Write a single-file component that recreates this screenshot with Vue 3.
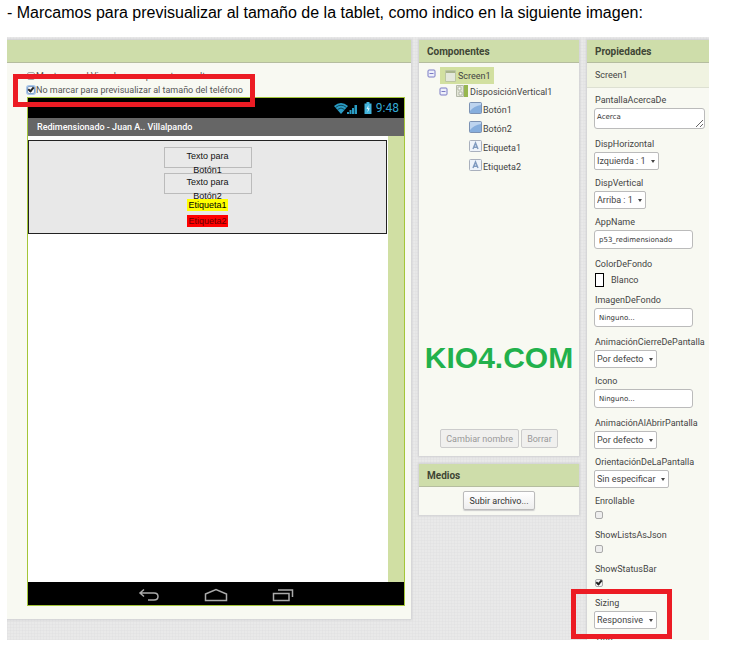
<script setup>
import { ref } from 'vue'

const showHidden = ref(false)
const tabletPreview = ref(true)

const tree = [
  { name: 'Botón1', kind: 'button' },
  { name: 'Botón2', kind: 'button' },
  { name: 'Etiqueta1', kind: 'label' },
  { name: 'Etiqueta2', kind: 'label' },
]

const properties = [
  { name: 'PantallaAcercaDe', type: 'area', value: 'Acerca' },
  { name: 'DispHorizontal', type: 'select', value: 'Izquierda : 1' },
  { name: 'DispVertical', type: 'select', value: 'Arriba : 1' },
  { name: 'AppName', type: 'text', value: 'p53_redimensionado' },
  { name: 'ColorDeFondo', type: 'color', value: 'Blanco' },
  { name: 'ImagenDeFondo', type: 'text', value: 'Ninguno...' },
  { name: 'AnimaciónCierreDePantalla', type: 'select', value: 'Por defecto' },
  { name: 'Icono', type: 'text', value: 'Ninguno...' },
  { name: 'AnimaciónAlAbrirPantalla', type: 'select', value: 'Por defecto' },
  { name: 'OrientaciónDeLaPantalla', type: 'select', value: 'Sin especificar' },
  { name: 'Enrollable', type: 'check', value: false },
  { name: 'ShowListsAsJson', type: 'check', value: false },
  { name: 'ShowStatusBar', type: 'check', value: true },
  { name: 'Sizing', type: 'select', value: 'Responsive', marked: true },
]
</script>

<template>
  <main class="page">
    <p class="intro">- Marcamos para previsualizar al tamaño de la tablet, como indico en la siguiente imagen:</p>

    <div class="designer">
      <section class="panel viewer">
        <div class="bar"></div>
        <div class="viewer-body">
          <label class="option"><input v-model="showHidden" type="checkbox" class="tick">Mostrar en el Visor los componentes ocultos</label>
          <label class="option focused"><input v-model="tabletPreview" type="checkbox" class="tick">No marcar para previsualizar al tamaño del teléfono<span class="mark mark-option"></span></label>

          <div class="device">
            <div class="status">
              <svg width="26" height="13" viewBox="0 0 26 13">
                <path d="M0 4 Q7 -2 14 4 L7 12 Z" fill="#2a9cc4" />
                <path d="M1.5 5.500 Q7 1 12.500 5.500 M3.500 7.500 Q7 4.500 10.500 7.500" fill="none" stroke="#06303f" stroke-width=".8" />
                <path d="M13 12v-2h2v2zM15.500 12V8h2v4zM18 12V6h2v6zM20.500 12V3h2.500v9z" fill="#2a9cc4" />
              </svg>
              <svg width="8" height="13" viewBox="0 0 8 13">
                <path d="M2.500 0h3v1.500H7.500V12H.5V1.500h2z" fill="#43b4dc" />
                <path d="M4.500 3 2.500 7h1.500L3.500 10.500 5.800 6.200H4.300z" fill="#e4f7ff" />
              </svg>
              <span class="clock">9:48</span>
            </div>
            <div class="app-title">Redimensionado - Juan A.. Villalpando</div>
            <div class="screen">
              <div class="canvas">
                <div class="arrangement">
                  <div class="cell"><button type="button" class="mock">Texto para Botón1</button></div>
                  <div class="cell"><button type="button" class="mock">Texto para Botón2</button></div>
                  <span class="tag yellow">Etiqueta1</span>
                  <span class="tag red">Etiqueta2</span>
                </div>
              </div>
            </div>
            <div class="nav">
              <svg width="22" height="14" viewBox="0 0 22 14"><path d="M6 1.500 2 5l4 3.500M2 5h14q4 0 4 3.500T16 12H10" /></svg>
              <svg width="24" height="14" viewBox="0 0 24 14"><path d="M1.500 6 12 1.500 22.500 6V12.500H1.500z" /></svg>
              <svg width="22" height="14" viewBox="0 0 22 14"><path d="M1.500 5.500H17V12.500H1.500zM6 2H20.500V9" /></svg>
            </div>
          </div>
        </div>
      </section>

      <div class="middle">
        <section class="panel components">
          <h2 class="bar">Componentes</h2>
          <ul class="tree">
            <li class="root">
              <svg class="minus" width="9" height="9" viewBox="0 0 9 9"><rect x="1" y="1" width="7" height="7" rx="1" /><path d="M2.500 4.500h4" /></svg>
              <span class="selected">
                <svg width="11" height="12" viewBox="0 0 11 12"><path d="M.5.5h10v11H.5z" fill="#e4e8db" stroke="#bcc6a2" /><path d="M1 1h9v2H1z" fill="#a8b48b" /></svg>
                Screen1
              </span>
            </li>
            <li class="child">
              <svg class="minus" width="9" height="9" viewBox="0 0 9 9"><rect x="1" y="1" width="7" height="7" rx="1" /><path d="M2.500 4.500h4" /></svg>
              <svg class="arr" width="12" height="12" viewBox="0 0 12 12"><path d="M.5.5h7v11h-7z" fill="#e3e6d8" stroke="#b4b9a8" /><path d="M2 2h3v3H2zM3 7h3v3H3z" fill="#fff" stroke="#9ba18c" stroke-width=".7" /><path d="M8 0h4v12H8z" fill="#97b750" /></svg>
              <span>DisposiciónVertical1</span>
            </li>
            <li v-for="item in tree" :key="item.name" class="leaf">
              <svg v-if="item.kind === 'button'" width="13" height="13" viewBox="0 0 13 13">
                <rect x=".5" y=".5" width="12" height="11" rx="1" fill="#86aedd" stroke="#7c92b3" />
                <path d="M1 1h11v2Q5 4 1 9z" fill="#bdd4ef" />
              </svg>
              <svg v-else width="13" height="13" viewBox="0 0 13 13">
                <rect x=".5" y=".5" width="12" height="11" rx="1" fill="#eef3fa" stroke="#a9b0bd" />
                <path d="M4 9 6.500 3 9 9M5 7.200h3" fill="none" stroke="#819bc0" stroke-width="1.500" />
              </svg>
              <span>{{ item.name }}</span>
            </li>
          </ul>
          <div class="brand">KIO4.COM</div>
          <div class="actions">
            <button type="button" class="btn" disabled>Cambiar nombre</button>
            <button type="button" class="btn" disabled>Borrar</button>
          </div>
        </section>

        <section class="panel media">
          <h2 class="bar">Medios</h2>
          <div class="upload"><button type="button" class="btn">Subir archivo...</button></div>
        </section>
      </div>

      <section class="panel props">
        <h2 class="bar">Propiedades</h2>
        <div class="target">Screen1</div>
        <div class="list">
          <div v-for="(p, i) in properties" :key="p.name" class="prop" :class="p.type">
            <label :for="'prop' + i">{{ p.name }}</label>
            <textarea v-if="p.type === 'area'" :id="'prop' + i" class="field" :value="p.value"></textarea>
            <input v-else-if="p.type === 'text'" :id="'prop' + i" type="text" class="field" :value="p.value">
            <button v-else-if="p.type === 'color'" :id="'prop' + i" type="button" class="color-pick"><i class="swatch"></i>{{ p.value }}</button>
            <input v-else-if="p.type === 'check'" :id="'prop' + i" type="checkbox" class="tick" :checked="p.value">
            <span v-else class="drop">
              <select :id="'prop' + i"><option>{{ p.value }}</option></select>
              <svg width="4" height="3" viewBox="0 0 4 3"><path d="M0 0h4L2 3z" fill="#444" /></svg>
            </span>
            <span v-if="p.marked" class="mark mark-prop"></span>
          </div>
          <div class="cut">Title</div>
        </div>
      </section>
    </div>
  </main>
</template>

<style>
body {
  margin: 0;
  background: #fff;
}
</style>

<style scoped>
* {
  box-sizing: border-box;
}

.page {
  font-family: Roboto, "Liberation Sans", sans-serif;
  font-size: 9px;
  color: #444;
}

.intro {
  margin: 0;
  padding: 3px 7px 14px;
  font: 16px/20px "Liberation Sans", Arial, sans-serif;
  color: #000;
}

.designer {
  display: flex;
  gap: 8px;
  margin: 0 37px 0 7px;
  padding-top: 3px;
  overflow: hidden;
  background-color: #e9e9e9;
  background-image:
    repeating-linear-gradient(90deg, #dededf60 0 1px, transparent 1px 3px),
    repeating-linear-gradient(0deg, #dededf60 0 1px, transparent 1px 3px);
}

.panel {
  background: #f8f9f2;
  box-shadow: 0 0 2px 1px #cfcfd2;
}

.bar {
  height: 23px;
  margin: 0;
  padding: 0 8px;
  border-bottom: 1px solid #b5bd9f;
  background: #ceddaa;
  font-size: 10px;
  line-height: 23px;
  font-weight: 700;
  color: #3f4635;
}

.viewer {
  flex: 1;
  min-width: 0;
  margin-bottom: 21px;
}

.viewer-body {
  padding: 6px 6px 13px 20px;
}

.option {
  position: relative;
  display: flex;
  align-items: center;
  width: max-content;
  height: 14px;
  color: #555;
}

.tick {
  appearance: none;
  flex: none;
  width: 8px;
  height: 8px;
  margin: 0;
  border: 1px solid #aaa;
  border-radius: 2px;
  background: #eee;
}

.tick:checked {
  background: #f4f4f4;
  position: relative;
}

.tick:checked::after {
  content: "";
  position: absolute;
  left: 2px;
  top: 0;
  width: 2px;
  height: 4px;
  border: solid #222;
  border-width: 0 2px 2px 0;
  box-sizing: content-box;
  transform: translate(-1px, -1px) rotate(40deg);
}

.option .tick {
  margin-right: 1px;
}

.option.focused .tick {
  border-color: #7fa3cf;
  box-shadow: 0 0 0 1px #a9c5e6;
}

.mark {
  position: absolute;
  z-index: 3;
  border: 5px solid #ec1c24;
  pointer-events: none;
}

.mark-option {
  top: -9px;
  right: -12px;
  bottom: -10px;
  left: -14px;
}

.mark-prop {
  top: -7px;
  left: -23px;
  width: 101px;
  height: 50px;
}

.device {
  border: 1px solid #a4c639;
}

.status {
  display: flex;
  align-items: center;
  justify-content: flex-end;
  gap: 4px;
  height: 20px;
  padding-right: 5px;
  background: #000;
}

.clock {
  font-size: 12px;
  color: #33a9d4;
}

.app-title {
  height: 18px;
  padding-left: 9px;
  background: #666;
  font-weight: 500;
  line-height: 18px;
  color: #fff;
}

.screen {
  padding-right: 16px;
  background: #d0dfa3;
}

.canvas {
  min-height: 446px;
  padding: 4px 1px 0 0;
  background: #fff;
}

.arrangement {
  display: flex;
  flex-direction: column;
  align-items: center;
  height: 94px;
  padding-top: 6px;
  border: 1px solid #222;
  background: #e8e8e8;
  font: 9px/12px "Liberation Sans", Arial, sans-serif;
  color: #000;
}

.cell {
  height: 26px;
  overflow: hidden;
}

.mock {
  position: relative;
  z-index: 0;
  display: block;
  width: 88px;
  padding: 2px 18px;
  border: 0;
  background: none;
  font: inherit;
  line-height: 14px;
  color: #111;
}

.mock::before {
  content: "";
  position: absolute;
  z-index: -1;
  inset: 0 0 auto;
  height: 19px;
  border: 1px solid #bbb;
  background: #e9e9e9;
}

.tag {
  padding: 0 1px;
}

.tag.yellow {
  background: #ff0;
}

.tag.red {
  margin-top: 4px;
  background: #f00;
  color: #600;
}

.nav {
  display: flex;
  align-items: center;
  justify-content: center;
  gap: 44px;
  height: 23px;
  padding-top: 3px;
  background: #000;
}

.nav svg {
  fill: none;
  stroke: #aaa;
  stroke-width: 1.5;
}

.middle {
  flex: none;
  width: 160px;
}

.components {
  height: 416px;
  display: flex;
  flex-direction: column;
}

.tree {
  margin: 0;
  padding: 4px 0 0 8px;
  list-style: none;
}

.tree li {
  display: flex;
  align-items: center;
}

.minus {
  fill: #eef0fa;
  stroke: #7b7bc4;
}

.root {
  height: 17px;
  gap: 4px;
}

.root .minus {
  margin-bottom: 4px;
}

.selected {
  display: flex;
  align-items: center;
  gap: 2px;
  height: 17px;
  padding: 0 3px 0 5px;
  background: #d2e0a0;
}

.child {
  height: 16px;
  padding-left: 12px;
}

.child .minus {
  margin-bottom: 2px;
}

.child .arr {
  margin: 0 2px 2px 8px;
}

.leaf {
  height: 19px;
  gap: 1px;
  padding-left: 42px;
}

.leaf svg {
  margin-bottom: 3px;
}

.brand {
  margin-top: auto;
  font: 700 30px/36px "Liberation Sans", Arial, sans-serif;
  text-align: center;
  color: #22b14c;
}

.actions {
  display: flex;
  justify-content: center;
  gap: 2px;
  padding: 53px 0 8px;
}

.btn {
  height: 19px;
  padding: 0 5px;
  border: 1px solid #bbb;
  border-radius: 2px;
  background: linear-gradient(#fff, #eee);
  font: inherit;
  color: #333;
  box-shadow: 0 1px 1px #ccc;
}

.btn:disabled {
  border-color: #ccc;
  background: #f0f0ee;
  color: #999;
  box-shadow: none;
}

.media {
  margin-top: 8px;
}

.upload {
  display: flex;
  justify-content: center;
  padding: 4px 0 5px;
}

.props {
  flex: none;
  width: 122px;
}

.target {
  height: 25px;
  padding-left: 8px;
  border-bottom: 1px solid #dde0d2;
  background: #f0f3e1;
  line-height: 24px;
}

.list {
  padding: 5px 0 0 7px;
}

.prop {
  position: relative;
  display: flex;
  flex-direction: column;
  align-items: flex-start;
  margin-bottom: 6px;
}

.prop.text,
.prop.area {
  margin-bottom: 8px;
}

.prop label {
  padding-left: 1px;
  line-height: 15px;
  white-space: nowrap;
}

.field {
  width: 99px;
  height: 19px;
  padding: 0 4px;
  border: 1px solid #bbb;
  border-radius: 3px;
  background: #fff;
  font: 7px/17px "DejaVu Sans", sans-serif;
  color: #333;
}

textarea.field {
  width: 111px;
  height: 21px;
  padding: 0 2px;
  overflow: hidden;
}

.color-pick {
  display: flex;
  align-items: center;
  gap: 7px;
  height: 15px;
  padding: 0 0 0 1px;
  border: 0;
  background: none;
  font: inherit;
  color: inherit;
}

.swatch {
  width: 9px;
  height: 14px;
  border: 1px solid #000;
  background: #fff;
}

.drop {
  display: flex;
  position: relative;
  align-items: center;
}

.drop select {
  appearance: none;
  height: 18px;
  padding: 0 12px 0 2px;
  border: 1px solid #bbb;
  border-radius: 2px;
  background: #fff;
  font: inherit;
  color: inherit;
}

.drop svg {
  position: absolute;
  right: 4px;
  pointer-events: none;
}

.prop .tick {
  margin: 2px 0 3px 1px;
}

.cut {
  height: 5px;
  overflow: hidden;
  padding-left: 1px;
  line-height: 10px;
}
</style>
